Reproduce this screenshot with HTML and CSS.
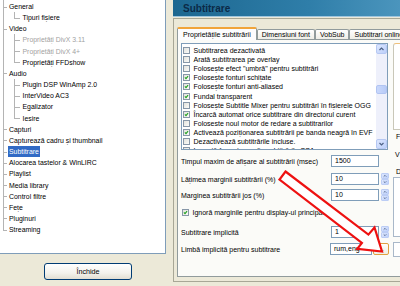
FILE: index.html
```html
<!DOCTYPE html>
<html>
<head>
<meta charset="utf-8">
<link rel="stylesheet" href="styles.css">
</head>
<body>
<div class="app">
  <aside class="side">
    <div class="tree">
      <ul class="lvl1">
        <li><span>General</span>
          <ul class="lvl2"><li><span>Tipuri fișiere</span></li></ul>
        </li>
        <li><span>Video</span>
          <ul class="lvl2">
            <li><span class="dis">Proprietăți DivX 3.11</span></li>
            <li><span class="dis">Proprietăți DivX 4+</span></li>
            <li><span>Proprietăți FFDshow</span></li>
          </ul>
        </li>
        <li><span>Audio</span>
          <ul class="lvl2">
            <li><span>Plugin DSP WinAmp 2.0</span></li>
            <li><span>InterVideo AC3</span></li>
            <li><span>Egalizator</span></li>
            <li><span>Iesire</span></li>
          </ul>
        </li>
        <li><span>Capturi</span></li>
        <li><span>Capturează cadru și thumbnail</span></li>
        <li><span class="sel">Subtitrare</span></li>
        <li><span>Alocarea tastelor &amp; WinLIRC</span></li>
        <li><span>Playlist</span></li>
        <li><span>Media library</span></li>
        <li><span>Control filtre</span></li>
        <li><span>Fețe</span></li>
        <li><span>Pluginuri</span></li>
        <li><span>Streaming</span></li>
      </ul>
    </div>
    <div class="side-foot"><button class="btn">Închide</button></div>
  </aside>

  <main class="main">
    <div class="head">Subtitrare</div>
    <div class="frame">
      <div class="tabs">
        <div class="tab active">Proprietățile subtitrării</div>
        <div class="tab">Dimensiuni font</div>
        <div class="tab">VobSub</div>
        <div class="tab">Subtitrari online</div>
      </div>
      <div class="page">
        <div class="col">
          <div class="list">
            <div class="items">
              <div class="item"><span class="cb"></span>Subtitrarea dezactivată</div>
              <div class="item"><span class="cb"></span>Arată subtitrarea pe overlay</div>
              <div class="item"><span class="cb"></span>Folosește efect "umbră" pentru subtitrări</div>
              <div class="item"><span class="cb on"><svg viewBox="0 0 7 7"><polyline points="1.3,3.4 2.8,5 5.7,1.6"/></svg></span>Folosește fonturi schițate</div>
              <div class="item"><span class="cb on"><svg viewBox="0 0 7 7"><polyline points="1.3,3.4 2.8,5 5.7,1.6"/></svg></span>Folosește fonturi anti-aliased</div>
              <div class="item"><span class="cb on"><svg viewBox="0 0 7 7"><polyline points="1.3,3.4 2.8,5 5.7,1.6"/></svg></span>Fundal transparent</div>
              <div class="item"><span class="cb"></span>Folosește Subtitle Mixer pentru subtitrări în fișierele OGG</div>
              <div class="item"><span class="cb on"><svg viewBox="0 0 7 7"><polyline points="1.3,3.4 2.8,5 5.7,1.6"/></svg></span>Încarcă automat orice subtitrare din directorul curent</div>
              <div class="item"><span class="cb"></span>Foloseste noul motor de redare a subtitrarilor</div>
              <div class="item"><span class="cb on"><svg viewBox="0 0 7 7"><polyline points="1.3,3.4 2.8,5 5.7,1.6"/></svg></span>Activează poziționarea subtitrării pe banda neagră în EVF</div>
              <div class="item"><span class="cb"></span>Dezactivează subtitrările incluse.</div>
              <div class="item"><span class="cb"></span>Importă formatarea din subtitrările SSA</div>
            </div>
            <div class="vscroll">
              <div class="sbtn"><svg viewBox="0 0 9 8"><polyline points="2.5,5 4.5,3 6.5,5"/></svg></div>
              <div class="thumb"></div>
              <div class="sbtn down"><svg viewBox="0 0 9 8"><polyline points="2.5,3 4.5,5 6.5,3"/></svg></div>
            </div>
          </div>

          <div class="row r1"><span class="lbl">Timpul maxim de afișare al subtitrării (msec)</span><span class="inp wide">1500</span></div>
          <div class="row r2"><span class="lbl">Lățimea marginii subtitrării (%)</span><span class="inp">10</span><span class="spin"><i><svg viewBox="0 0 8 6"><polyline points="2,4 4,2 6,4"/></svg></i><i><svg viewBox="0 0 8 6"><polyline points="2,2 4,4 6,2"/></svg></i></span></div>
          <div class="row r3"><span class="lbl">Marginea subtitrării jos (%)</span><span class="inp">10</span><span class="spin"><i><svg viewBox="0 0 8 6"><polyline points="2,4 4,2 6,4"/></svg></i><i><svg viewBox="0 0 8 6"><polyline points="2,2 4,4 6,2"/></svg></i></span></div>
          <div class="row r4"><span class="cb on"><svg viewBox="0 0 7 7"><polyline points="1.3,3.4 2.8,5 5.7,1.6"/></svg></span><span class="lbl">Ignoră marginile pentru display-ul principal</span></div>
          <div class="row r5"><span class="lbl">Subtitrare implicită</span><span class="inp">1</span><span class="spin"><i><svg viewBox="0 0 8 6"><polyline points="2,4 4,2 6,4"/></svg></i><i><svg viewBox="0 0 8 6"><polyline points="2,2 4,4 6,2"/></svg></i></span></div>
          <div class="row r6"><span class="lbl">Limbă implicită pentru subtitrare</span><span class="inp lang">rum,eng</span><span class="dots">...</span></div>
        </div>

        <div class="col2">
          <div class="gbox"></div>
          <div class="letter l1">F</div>
          <div class="letter l2">V</div>
          <div class="letter l3">D</div>
          <div class="rbox big"></div>
          <div class="rbox small"></div>
        </div>
      </div>
    </div>
  </main>

  <svg class="arrow" viewBox="0 0 400 286" width="400" height="286">
    <polygon points="285.5,171.5 368.4,234.6 374.5,227.5 382,251.5 357.3,248.8 361.9,243 279.5,179.5"/>
  </svg>
</div>
</body>
</html>
```

FILE: styles.css
```css
* { box-sizing: border-box; margin: 0; padding: 0; }
html, body { width: 400px; height: 286px; overflow: hidden; }
body {
  background: #ece9d8;
  font-family: "Liberation Sans", Arial, sans-serif;
  font-size: 7px;
  color: #000;
}
.app { position: relative; display: flex; width: 400px; height: 286px; overflow: hidden; }

/* ---------- left tree ---------- */
.side { width: 173px; flex: none; display: flex; flex-direction: column; }
.tree {
  width: 166px; height: 254px; background: #fff;
  border-right: 1px solid #7f9db9; border-bottom: 1px solid #7f9db9;
  padding-top: 1px; font-size: 6.9px; overflow: hidden;
}
.tree ul { list-style: none; }
.tree li { position: relative; line-height: 11.15px; }
.tree li > span { display: inline-block; padding: 0 1px; vertical-align: top; white-space: nowrap; }
.tree li::before {
  content: ""; position: absolute; left: 0; top: 0; bottom: 0;
  border-left: 1px solid #b4b4b4;
}
.tree li:last-child::before { bottom: auto; height: 6px; }
.tree li::after {
  content: ""; position: absolute; left: 0; top: 5.5px; width: 4px;
  border-top: 1px solid #b4b4b4;
}
.lvl1 { margin-left: 3px; }
.lvl1 > li { padding-left: 5px; }
.lvl1 > li:first-child::before { top: -2px; }
.lvl2 { margin-left: 6px; }
.lvl2 > li { padding-left: 7.5px; }
.lvl2 > li::after { width: 6px; }
.tree .dis { color: #a2a2a2; }
.tree .sel { background: #316ac5; color: #fff; }

.side-foot { padding: 9px 0 0 44px; }
.btn {
  width: 88px; height: 17px;
  border: 1px solid #003c74; border-radius: 3px;
  background: linear-gradient(#ffffff, #f3f2ec 60%, #e2ded2);
  font-family: inherit; font-size: 7.2px; color: #000;
}

/* ---------- right panel ---------- */
.main { flex: 1; min-width: 0; overflow: hidden; }
.head {
  height: 17px; padding: 1px 0 0 10px;
  background: linear-gradient(90deg, #1c6790, #2f7ea9 60%, #4b95bd);
  border-bottom: 1px solid #9fc6de;
  color: #0b2a47; font-weight: bold; font-size: 10px; line-height: 15px;
}
.frame {
  margin-top: 1px; height: 264px;
  border: 1px solid #a8a796; border-right: none;
  padding: 8px 0 0 3px;
}
.tabs { display: flex; align-items: flex-end; height: 12px; white-space: nowrap; }
.tab {
  height: 10px; padding: 0 4px;
  border: 1px solid #919b9c; border-bottom: none; border-radius: 2px 2px 0 0;
  background: linear-gradient(#ffffff, #eeede6);
  line-height: 9px;
}
.tab.active {
  position: relative; z-index: 1;
  height: 13px; margin-bottom: -1px; padding: 0 5px;
  background: #fcfcfe;
  border-top: 2px solid #f1a43a;
  line-height: 11px;
}
.page {
  display: flex; height: 238px;
  border: 1px solid #919b9c; border-right: none;
  background: #fbfbf8;
  padding: 3px 0 0 3px;
}
.col { width: 208px; flex: none; }

/* listbox */
.list {
  display: flex; width: 207px; height: 107px;
  border: 1px solid #7f9db9; background: #fff;
}
.items { flex: 1; padding: 2px 0 0 1px; overflow: hidden; }
.item { display: flex; align-items: center; height: 9.1px; white-space: nowrap; }
.cb {
  flex: none; width: 7px; height: 7px; margin-right: 3.5px;
  border: 1px solid #8797a8;
  background: linear-gradient(135deg, #e2e2dc, #fbfbf9);
}
.cb svg { display: block; width: 5px; height: 5px; }
.cb svg polyline { fill: none; stroke: #21a121; stroke-width: 1.6; }

.vscroll {
  width: 11px; flex: none; display: flex; flex-direction: column;
  background: #eef0fb; padding: 0;
}
.sbtn {
  height: 10px; border: 1px solid #b6c8f3; border-radius: 2px;
  background: linear-gradient(135deg, #dde7fe, #bccffa);
}
.sbtn svg { display: block; width: 9px; height: 8px; }
.sbtn polyline, .spin polyline { fill: none; stroke: #4d6185; stroke-width: 1.2; }
.thumb {
  height: 9px; margin-top: 31px;
  border: 1px solid #b1c4f2; border-radius: 2px;
  background: linear-gradient(90deg, #c9d8fc, #b8cbf7);
}
.sbtn.down { margin-top: auto; }

/* form rows */
.row { display: flex; align-items: center; height: 12px; white-space: nowrap; }
.r1 { margin-top: 5px; }
.r2 { margin-top: 6px; }
.r3 { margin-top: 4px; }
.r4 { margin-top: 5px; }
.r5 { margin-top: 8px; }
.r6 { margin-top: 5px; }
.lbl { flex: 1; }
.r4 .cb { margin-left: 1px; }
.inp {
  width: 48px; height: 12px; flex: none;
  border: 1px solid #7f9db9; background: #fff;
  padding-left: 3px; line-height: 10px;
}
.inp.wide { margin-right: 10px; }
.inp.lang { width: 42px; }
.spin { display: flex; flex-direction: column; width: 8px; height: 12px; margin-left: 2px; flex: none; gap: 0; }
.spin i {
  flex: 1; display: block;
  border: 1px solid #bccdf5; border-radius: 1px;
  background: linear-gradient(135deg, #dfe8fe, #bdd0fa);
}
.spin svg { display: block; width: 6px; height: 4px; }
.dots {
  width: 16px; height: 12px; margin-left: 1px; flex: none;
  border: 1px solid #e0a040; border-radius: 2px;
  background: linear-gradient(#fffefb, #f0eee6);
  text-align: center; line-height: 10px; color: #555;
}

/* cut-off right column */
.col2 { margin-left: 4px; width: 30px; flex: none; }
.gbox {
  height: 87px; border: 1px solid #c9c7b8; border-top-color: #efc07a;
  border-radius: 3px 0 0 0; background: #fff;
}
.l1 { margin-top: 3px; line-height: 8px; height: 8px; padding-left: 3px; }
.l2 { margin-top: 10px; line-height: 8px; height: 8px; padding-left: 2px; }
.l3 { margin-top: 9px; line-height: 8px; height: 8px; padding-left: 3px; }
.rbox { border: 1px solid #a9b8c9; background: #fff; }
.rbox.big { margin-top: 1px; height: 60px; }
.rbox.small { margin-top: 5px; height: 15px; }

/* annotation arrow */
.arrow { position: absolute; left: 0; top: 0; pointer-events: none; }
.arrow polygon { fill: #fff; stroke: #ee1111; stroke-width: 2.2; stroke-linejoin: miter; }
```
